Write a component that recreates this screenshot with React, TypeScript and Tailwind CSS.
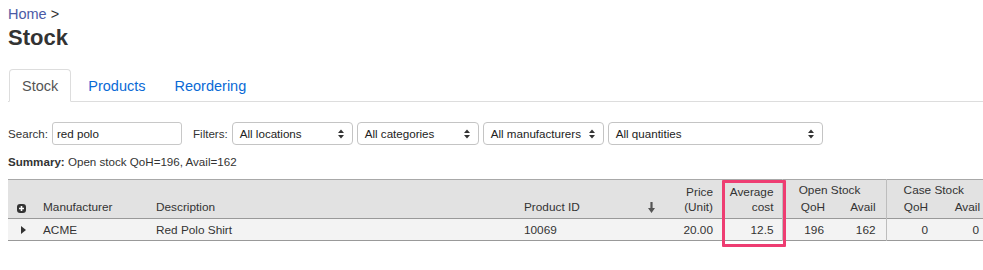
import type { ReactNode } from 'react';

const font = { fontFamily: '"Liberation Sans", Arial, Helvetica, sans-serif' };

function SelectArrows() {
  return (
    <svg width="6" height="10" viewBox="0 0 6 10" className="pointer-events-none absolute right-[8px] top-1/2 -translate-y-1/2">
      <path d="M0 4 L3 0.5 L6 4 Z" fill="#333" />
      <path d="M0 6 L3 9.5 L6 6 Z" fill="#333" />
    </svg>
  );
}

function FakeSelect({ label, width }: { label: string; width: string }) {
  return (
    <div className={`relative flex h-[23px] items-center rounded-[4px] border border-[#c4c4c4] bg-white pl-[7px] text-[11.6px] text-[#222] ${width}`}>
      {label}
      <SelectArrows />
    </div>
  );
}

function Th({
  children,
  className = '',
  rowSpan,
  colSpan,
}: {
  children?: ReactNode;
  className?: string;
  rowSpan?: number;
  colSpan?: number;
}) {
  return (
    <th rowSpan={rowSpan} colSpan={colSpan} className={`p-0 font-normal ${className}`}>
      {children}
    </th>
  );
}

export default function App() {
  const selects = [
    { label: 'All locations', width: 'w-[121px]' },
    { label: 'All categories', width: 'w-[122px]' },
    { label: 'All manufacturers', width: 'w-[121px]' },
    { label: 'All quantities', width: 'w-[215px]' },
  ];

  return (
    <div className="h-[270px] w-[983px] overflow-hidden bg-white text-[#333]" style={font}>
      <div className="pl-[8px]">
        {/* Breadcrumb + title */}
        <div className="pt-[5px] text-[14.5px] leading-[18px]">
          <span className="text-[#4b5aa6]">Home</span> <span className="text-[#333]">&gt;</span>
        </div>
        <h1 className="mt-[2px] text-[22px] font-bold leading-[26px] text-[#333]">Stock</h1>

        {/* Tabs */}
        <div className="mt-[18px] flex border-b border-[#dddddd] pl-[1px] text-[14.5px] leading-[18px]">
          <div className="-mb-px rounded-t-[4px] border border-[#dddddd] border-b-white bg-white px-[12px] pt-[7px] pb-[5px] text-[#555]">
            Stock
          </div>
          <div className="ml-[2px] border border-transparent px-[14px] pt-[7px] pb-[5px] text-[#0a6ad6]">Products</div>
          <div className="border border-transparent px-[13px] pt-[7px] pb-[5px] text-[#0a6ad6]">Reordering</div>
        </div>

        {/* Filters */}
        <div className="mt-[20px] flex items-center text-[11.6px] text-[#333]">
          <span>Search:</span>
          <div className="ml-[4px] flex h-[23px] w-[130px] items-center rounded-[3px] border border-[#c8c8c8] bg-white pl-[4px] text-[#222]">
            red polo
          </div>
          <span className="ml-[11px]">Filters:</span>
          <div className="ml-[4px] flex gap-[4px]">
            {selects.map((s) => (
              <FakeSelect key={s.label} label={s.label} width={s.width} />
            ))}
          </div>
        </div>

        {/* Summary */}
        <div className="mt-[9px] text-[11.6px] leading-[16px] text-[#333]">
          <span className="font-bold">Summary:</span> Open stock QoH=196, Avail=162
        </div>

        {/* Table */}
        <div className="relative mt-[9px] w-[982px]">
          <table className="w-[982px] table-fixed border-collapse text-[11.8px] text-[#333]">
            <colgroup>
              <col className="w-[27px]" />
              <col className="w-[113px]" />
              <col className="w-[368px]" />
              <col className="w-[124px]" />
              <col className="w-[25px]" />
              <col className="w-[57px]" />
              <col className="w-[60px]" />
              <col className="w-[52px]" />
              <col className="w-[52px]" />
              <col className="w-[52px]" />
              <col className="w-[52px]" />
            </colgroup>
            <thead className="bg-[#e2e2e2] leading-[14px]">
              <tr className="h-[20px] border-t border-[#a8a8a8]">
                <Th rowSpan={2} className="pb-[5px] pl-[9px] align-bottom">
                  <span className="flex h-[9px] w-[9px] items-center justify-center rounded-[3px] bg-[#333]">
                    <svg width="7" height="7" viewBox="0 0 7 7">
                      <path d="M3.5 1 V6 M1 3.5 H6" stroke="#fff" strokeWidth="1.6" />
                    </svg>
                  </span>
                </Th>
                <Th rowSpan={2} className="pb-[4px] pl-[8px] text-left align-bottom">Manufacturer</Th>
                <Th rowSpan={2} className="pb-[4px] pl-[8px] text-left align-bottom">Description</Th>
                <Th rowSpan={2} className="pb-[4px] pl-[8px] text-left align-bottom">Product ID</Th>
                <Th rowSpan={2} className="pb-[5px] pl-[8px] text-left align-bottom">
                  <svg width="7" height="11" viewBox="0 0 7 11" className="block">
                    <path d="M2.4 0 H4.6 V6 H7 L3.5 11 L0 6 H2.4 Z" fill="#555" />
                  </svg>
                </Th>
                <Th rowSpan={2} className="pb-[3px] pr-[9px] text-right align-bottom leading-[15px]">
                  Price
                  <br />
                  (Unit)
                </Th>
                <Th rowSpan={2} className="pb-[3px] pr-[8px] text-right align-bottom leading-[15px]">
                  Average
                  <br />
                  cost
                </Th>
                <Th colSpan={2} className="border-l border-[#bdbdbd] pr-[9px] pt-[3px] text-center align-top">
                  Open Stock
                </Th>
                <Th colSpan={2} className="border-l border-[#bdbdbd] pr-[9px] pt-[3px] text-center align-top">
                  Case Stock
                </Th>
              </tr>
              <tr className="h-[19px] border-b border-[#999]">
                <Th className="border-l border-[#bdbdbd] pb-[4px] pr-[9px] text-right align-bottom">QoH</Th>
                <Th className="pb-[4px] pr-[10px] text-right align-bottom">Avail</Th>
                <Th className="border-l border-[#bdbdbd] pb-[4px] pr-[10px] text-right align-bottom">QoH</Th>
                <Th className="pb-[4px] pr-[10px] text-right align-bottom">Avail</Th>
              </tr>
            </thead>
            <tbody className="bg-[#f3f3f3] leading-[14px]">
              <tr className="h-[22px] border-b border-[#999]">
                <td className="p-0 pl-[13px] pt-[1px] align-middle">
                  <svg width="5" height="8" viewBox="0 0 5 8" className="block">
                    <path d="M0 0 L5 4 L0 8 Z" fill="#333" />
                  </svg>
                </td>
                <td className="p-0 pl-[8px] pt-[1px] align-middle">ACME</td>
                <td className="p-0 pl-[8px] pt-[1px] align-middle">Red Polo Shirt</td>
                <td className="p-0 pl-[8px] pt-[1px] align-middle">10069</td>
                <td className="p-0" />
                <td className="p-0 pr-[9px] pt-[1px] text-right align-middle">20.00</td>
                <td className="p-0 pr-[8px] pt-[1px] text-right align-middle">12.5</td>
                <td className="border-l border-[#bdbdbd] p-0 pr-[10px] pt-[1px] text-right align-middle">196</td>
                <td className="p-0 pr-[10px] pt-[1px] text-right align-middle">162</td>
                <td className="border-l border-[#bdbdbd] p-0 pr-[10px] pt-[1px] text-right align-middle">0</td>
                <td className="p-0 pr-[11px] pt-[1px] text-right align-middle">0</td>
              </tr>
            </tbody>
          </table>

          {/* highlight annotation */}
          <div className="pointer-events-none absolute left-[714px] top-[1px] h-[67px] w-[64px] rounded-[1px] border-[3px] border-[#ee3d72]" />
        </div>
      </div>
    </div>
  );
}
